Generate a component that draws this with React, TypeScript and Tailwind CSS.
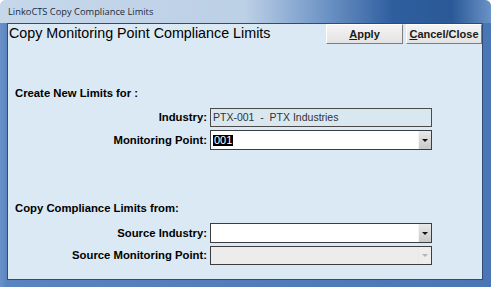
import React from "react"

function Arrow({ disabled }: { disabled?: boolean }) {
  return (
    <div className={`w-[13px] h-full flex items-center justify-center border-l ${disabled ? "border-l-[#e6e6e6] bg-[#ededed]" : "border-l-[#f4f4f4] bg-gradient-to-b from-[#e9e9e9] to-[#c9c9c9]"}`}>
      <div className={`w-0 h-0 border-l-[3px] border-r-[3px] border-t-[3px] border-l-transparent border-r-transparent ${disabled ? "border-t-[#b4b4b4]" : "border-t-[#111]"}`} />
    </div>
  )
}

function Combo({ value, disabled, h }: { value?: string; disabled?: boolean; h: string }) {
  return (
    <div className={`${h} flex border border-[#3d3d3d] ${disabled ? "bg-[#ececec]" : "bg-white"}`}>
      <div className="flex-1 flex items-center pl-[2px]">
        {value && <span className="bg-black text-white text-[11px] leading-[11px] px-[1px] font-normal">{value}</span>}
      </div>
      <Arrow disabled={disabled} />
    </div>
  )
}

function Btn({ first, rest, w }: { first: string; rest: string; w: string }) {
  return (
    <button className={`${w} h-[20px] flex items-center justify-center border border-t-white border-l-white border-r-[#7d7d7d] border-b-[#7d7d7d] bg-gradient-to-b from-[#f4f4f4] to-[#e3e3e3] text-[11px] font-bold text-[#1a1a1a]`}>
      <span className="underline">{first}</span>{rest}
    </button>
  )
}

export default function App() {
  return (
    <div className="w-[491px] h-[287px] flex flex-col rounded-t-[6px] overflow-hidden bg-[linear-gradient(to_bottom,#c4d6ea_0%,#8eaed8_35%,#4f7bb8_100%)] font-['Liberation_Sans',Arial,sans-serif]">
      <div className="h-[23px] shrink-0 flex items-center pl-[8px] bg-[linear-gradient(to_right,#c6d7ea_0%,#bcd0e6_50%,#6f95c6_66%,#2f5e9f_80%,#2b5997_92%,#6a92c6_100%)]">
        <span className="text-[9.3px] text-[#1e2a3a] font-['Open_Sans','Noto_Sans',sans-serif]">LinkoCTS Copy Compliance Limits</span>
      </div>
      <div className="flex-1 flex pl-[7px] pr-[8px] pb-[7px] bg-[linear-gradient(to_right,#6a91c9_0%,#5a84bf_1.5%,#4a76b5_100%)]">
        <div className="flex-1 flex flex-col border border-[#2f4c78] bg-[#dae9f4]">
          <div className="h-[20px] flex items-start justify-between">
            <span className="pl-[1px] text-[14.3px] text-black leading-[16px] mt-[1px]">Copy Monitoring Point Compliance Limits</span>
            <div className="flex gap-[3px]">
              <Btn first="A" rest="pply" w="w-[77px]" />
              <Btn first="C" rest="ancel/Close" w="w-[76px]" />
            </div>
          </div>

          <div className="mt-[42px] pl-[7px] text-[11.3px] leading-[14px] font-bold text-black">Create New Limits for :</div>
          <div className="mt-[8px] grid grid-cols-[199px_222px] gap-x-[3px] text-[11.3px] font-bold text-black">
            <div className="h-[19px] flex items-center justify-end">Industry:</div>
            <div className="h-[19px] flex items-center border border-[#4a4a4a] bg-[#d9e7f0] pl-[2px]">
              <span className="font-normal text-[10.5px] text-[#333] whitespace-pre">PTX-001  -  PTX Industries</span>
            </div>
            <div className="mt-[3px] h-[20px] flex items-center justify-end">Monitoring Point:</div>
            <div className="mt-[3px]"><Combo value="001" h="h-[20px]" /></div>
          </div>

          <div className="mt-[51px] pl-[7px] text-[11.3px] leading-[14px] font-bold text-black">Copy Compliance Limits from:</div>
          <div className="mt-[8px] grid grid-cols-[199px_222px] gap-x-[3px] text-[11.3px] font-bold text-black">
            <div className="h-[20px] flex items-center justify-end">Source Industry:</div>
            <Combo h="h-[20px]" />
            <div className="mt-[3px] h-[19px] flex items-center justify-end">Source Monitoring Point:</div>
            <div className="mt-[3px]"><Combo disabled h="h-[19px]" /></div>
          </div>
        </div>
      </div>
    </div>
  )
}
